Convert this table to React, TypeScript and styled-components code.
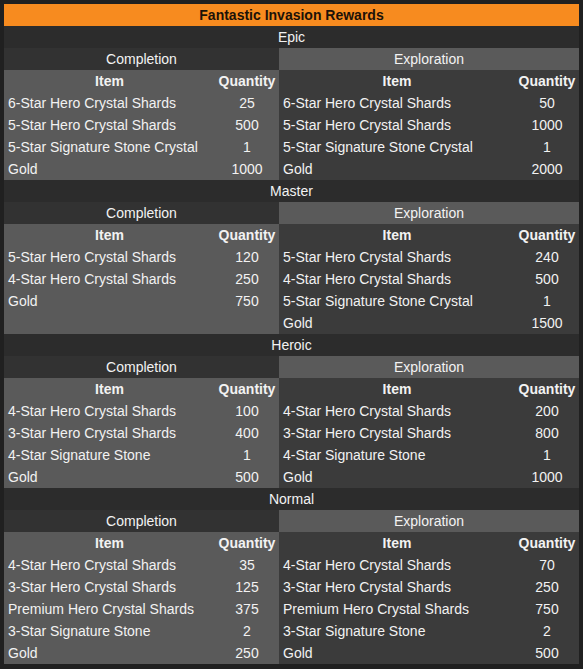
import React from "react";
import styled, { createGlobalStyle } from "styled-components";

const Global = createGlobalStyle`
  html, body { margin: 0; padding: 0; background: #202020; }
  body { font-family: "Liberation Sans", Arial, Helvetica, sans-serif; font-size: 14px; color: #f2f2f2; }
`;

const Page = styled.div`
  padding: 4px;
  width: 575px;
`;

const Title = styled.div`
  height: 22px;
  line-height: 22px;
  background: #f78b1f;
  color: #1c1208;
  font-weight: 700;
  text-align: center;
`;

const TierLabel = styled.div`
  height: 22px;
  line-height: 22px;
  background: #2c2c2c;
  text-align: center;
`;

const TierBody = styled.div`
  display: grid;
  grid-template-columns: 275px 300px;
`;

const Panel = styled.div<{ $side: "left" | "right" }>`
  background: ${(p) => (p.$side === "left" ? "#5a5a5a" : "#3b3b3b")};
`;

const PanelHead = styled.div<{ $side: "left" | "right" }>`
  height: 22px;
  line-height: 22px;
  text-align: center;
  background: ${(p) => (p.$side === "left" ? "#323232" : "#5a5a5a")};
`;

const Table = styled.div`
  display: grid;
  grid-template-columns: 1fr 64px;
  grid-auto-rows: 22px;
  line-height: 22px;
`;

const Cell = styled.div<{ $head?: boolean; $qty?: boolean }>`
  padding: 0 4px;
  white-space: nowrap;
  font-weight: ${(p) => (p.$head ? 700 : 400)};
  text-align: ${(p) => (p.$head || p.$qty ? "center" : "left")};
  ${(p) => (p.$head && p.$qty ? "padding: 0 1px;" : "")}
`;

type Row = [string, string];
type Tier = { name: string; completion: Row[]; exploration: Row[] };

const tiers: Tier[] = [
  {
    name: "Epic",
    completion: [
      ["6-Star Hero Crystal Shards", "25"],
      ["5-Star Hero Crystal Shards", "500"],
      ["5-Star Signature Stone Crystal", "1"],
      ["Gold", "1000"],
    ],
    exploration: [
      ["6-Star Hero Crystal Shards", "50"],
      ["5-Star Hero Crystal Shards", "1000"],
      ["5-Star Signature Stone Crystal", "1"],
      ["Gold", "2000"],
    ],
  },
  {
    name: "Master",
    completion: [
      ["5-Star Hero Crystal Shards", "120"],
      ["4-Star Hero Crystal Shards", "250"],
      ["Gold", "750"],
    ],
    exploration: [
      ["5-Star Hero Crystal Shards", "240"],
      ["4-Star Hero Crystal Shards", "500"],
      ["5-Star Signature Stone Crystal", "1"],
      ["Gold", "1500"],
    ],
  },
  {
    name: "Heroic",
    completion: [
      ["4-Star Hero Crystal Shards", "100"],
      ["3-Star Hero Crystal Shards", "400"],
      ["4-Star Signature Stone", "1"],
      ["Gold", "500"],
    ],
    exploration: [
      ["4-Star Hero Crystal Shards", "200"],
      ["3-Star Hero Crystal Shards", "800"],
      ["4-Star Signature Stone", "1"],
      ["Gold", "1000"],
    ],
  },
  {
    name: "Normal",
    completion: [
      ["4-Star Hero Crystal Shards", "35"],
      ["3-Star Hero Crystal Shards", "125"],
      ["Premium Hero Crystal Shards", "375"],
      ["3-Star Signature Stone", "2"],
      ["Gold", "250"],
    ],
    exploration: [
      ["4-Star Hero Crystal Shards", "70"],
      ["3-Star Hero Crystal Shards", "250"],
      ["Premium Hero Crystal Shards", "750"],
      ["3-Star Signature Stone", "2"],
      ["Gold", "500"],
    ],
  },
];

function RewardPanel({ side, title, rows }: { side: "left" | "right"; title: string; rows: Row[] }) {
  return (
    <Panel $side={side}>
      <PanelHead $side={side}>{title}</PanelHead>
      <Table>
        <Cell $head>Item</Cell>
        <Cell $head $qty>Quantity</Cell>
        {rows.map(([item, qty], i) => (
          <React.Fragment key={i}>
            <Cell>{item}</Cell>
            <Cell $qty>{qty}</Cell>
          </React.Fragment>
        ))}
      </Table>
    </Panel>
  );
}

export default function App() {
  return (
    <Page>
      <Global />
      <Title>Fantastic Invasion Rewards</Title>
      {tiers.map((t) => (
        <div key={t.name}>
          <TierLabel>{t.name}</TierLabel>
          <TierBody>
            <RewardPanel side="left" title="Completion" rows={t.completion} />
            <RewardPanel side="right" title="Exploration" rows={t.exploration} />
          </TierBody>
        </div>
      ))}
    </Page>
  );
}
